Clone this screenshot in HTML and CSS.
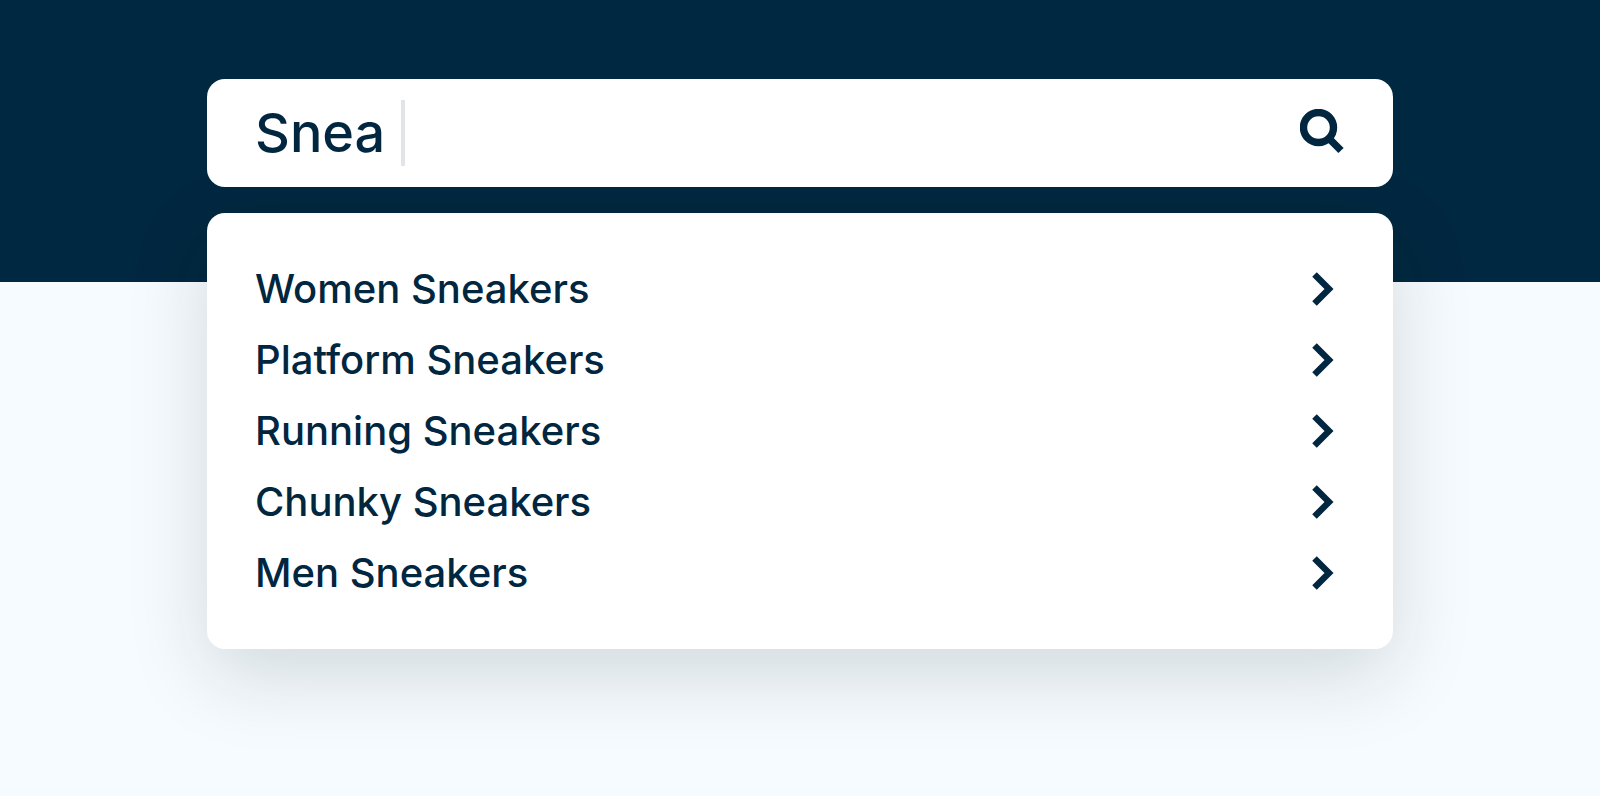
FILE: index.html
```html
<!DOCTYPE html>
<html lang="en">
<head>
<meta charset="utf-8">
<meta name="viewport" content="width=device-width, initial-scale=1">
<title>Search</title>
<link rel="stylesheet" href="styles.css">
</head>
<body>
<svg class="sprite" aria-hidden="true">
  <symbol id="chevron" viewBox="0 0 22 34"><path d="M2.5 2.5 17 17 2.5 31.5" fill="none" stroke="currentColor" stroke-width="6.4"/></symbol>
</svg>
<main class="page">
  <form class="search" role="search">
    <label class="field">
      <input class="field-input" type="text" value="Snea" aria-label="Search products" autocomplete="off">
      <span class="caret"></span>
    </label>
    <button class="search-button" type="submit" aria-label="Search">
      <svg class="search-icon" viewBox="0 0 45 48" fill="none" stroke="currentColor" stroke-width="7.4" aria-hidden="true">
        <circle cx="18.5" cy="18.5" r="15"/>
        <path d="M28 28.5 41 41.5"/>
      </svg>
    </button>
  </form>
  <ul class="suggestions">
    <li><a class="suggestion" href="#">Women Sneakers<svg class="chevron" aria-hidden="true"><use href="#chevron"/></svg></a></li>
    <li><a class="suggestion" href="#">Platform Sneakers<svg class="chevron" aria-hidden="true"><use href="#chevron"/></svg></a></li>
    <li><a class="suggestion" href="#">Running Sneakers<svg class="chevron" aria-hidden="true"><use href="#chevron"/></svg></a></li>
    <li><a class="suggestion" href="#">Chunky Sneakers<svg class="chevron" aria-hidden="true"><use href="#chevron"/></svg></a></li>
    <li><a class="suggestion" href="#">Men Sneakers<svg class="chevron" aria-hidden="true"><use href="#chevron"/></svg></a></li>
  </ul>
</main>
</body>
</html>
```
FILE: styles.css
```css
* {
  box-sizing: border-box;
}

body {
  margin: 0;
  color: #002640;
  font-family: Inter, "Open Sans", sans-serif;
  font-weight: 500;
}

.sprite {
  display: none;
}

.page {
  display: flex;
  flex-direction: column;
  gap: 26px;
  min-height: 100vh;
  padding: 79px calc(13vw - 1px);
  background: linear-gradient(#002840 282px, #f6fbff 282px);
}

.search,
.suggestions {
  border-radius: 18px;
  background: #fff;
}

.search {
  position: relative;
  z-index: 1;
  display: flex;
  align-items: center;
  justify-content: space-between;
  padding: 21px 48px;
}

.field {
  display: flex;
  flex: 1;
  align-items: center;
  gap: 16px;
  min-width: 0;
}

.field-input {
  field-sizing: content;
  max-width: 100%;
  padding: 0;
  border: 0;
  outline: 0;
  background: none;
  color: inherit;
  font: inherit;
  font-size: 54px;
  line-height: 66px;
}

.caret {
  width: 4px;
  height: 66px;
  background: #e1e5e9;
}

.search-button {
  display: flex;
  padding: 0;
  border: 0;
  background: none;
  color: inherit;
  cursor: pointer;
}

.search-icon {
  width: 45px;
  height: 48px;
}

.suggestions {
  margin: 0;
  padding: 40px 59px 41px 48px;
  list-style: none;
  box-shadow: 0 26px 80px rgba(0, 24, 24, 0.15);
}

.suggestion {
  display: flex;
  align-items: center;
  justify-content: space-between;
  color: inherit;
  font-size: 40px;
  line-height: 71px;
  text-decoration: none;
}

.chevron {
  flex: none;
  width: 22px;
  height: 34px;
}
```
